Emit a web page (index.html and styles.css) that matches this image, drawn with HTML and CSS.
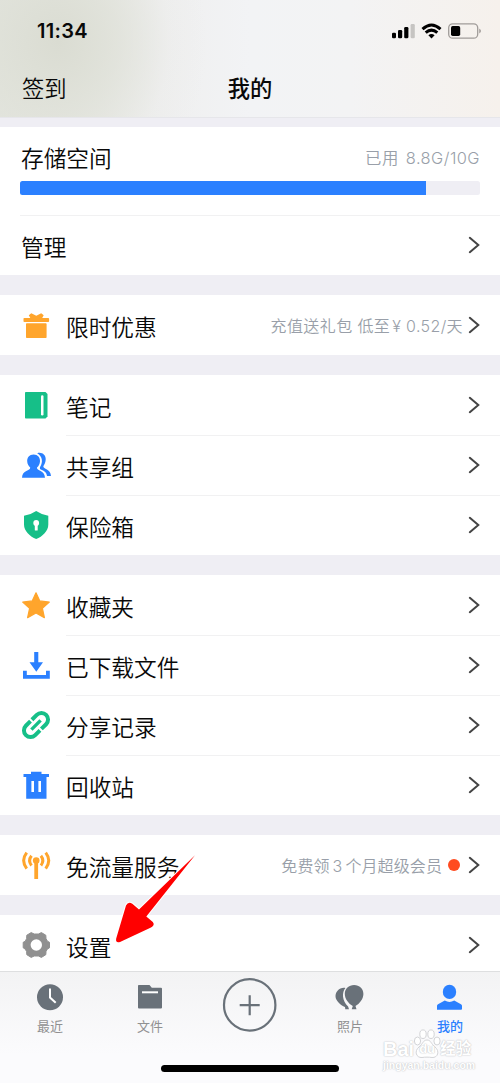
FILE: index.html
```html
<!DOCTYPE html>
<html lang="zh-CN">
<head>
<meta charset="utf-8">
<title>我的</title>
<link rel="stylesheet" href="styles.css">
</head>
<body>
<svg width="0" height="0" class="defs"><symbol id="chevron" viewBox="0 0 12 18"><path d="M1.8 1.8 10.3 9 1.8 16.2" fill="none" stroke="#444" stroke-width="2" stroke-linecap="round"/></symbol></svg>
<div class="phone">
  <header class="header">
    <div class="status">
      <span class="time">11:34</span>
      <svg class="status-icons" width="92" height="20" viewBox="0 0 92 20">
        <rect x="1" y="11.7" width="4" height="5.6" rx="1.3"/><rect x="7" y="9" width="4.2" height="8.3" rx="1.3"/><rect x="13.2" y="6" width="4.2" height="11.3" rx="1.3"/><rect x="19.6" y="3" width="4.2" height="14.3" rx="1.3" fill="#c6c4c2"/>
        <g fill="none" stroke="#000" stroke-width="3"><path d="M31.5 8.1Q40.5 0 49.5 8.1"/><path d="M34.7 11.7Q40.5 6.6 46.3 11.7"/></g>
        <path d="M37.4 14.2Q40.5 11.7 43.6 14.2L40.5 17.4Z"/>
        <rect x="57.7" y="2.8" width="29" height="14.4" rx="4" fill="none" stroke="#a09c99" stroke-width="1.3"/><rect x="60" y="5" width="9.2" height="10" rx="1.7"/><path d="M88.3 7.5Q91.5 10 88.3 12.5Z" fill="#98928f"/>
      </svg>
    </div>
    <div class="nav"><span class="checkin">签到</span><h1 class="title">我的</h1><span></span></div>
  </header>

  <main class="content">
    <section class="group storage">
      <div class="usage">
        <div class="usage-head"><span class="label">存储空间</span><span class="used">已用 8.8G/10G</span></div>
        <div class="meter"><div class="meter-fill" style="width:88.2%"></div></div>
      </div>
      <div class="row manage"><span class="label">管理</span><svg class="chevron"><use href="#chevron"/></svg></div>
    </section>

    <section class="group">
      <div class="row">
        <svg class="icon" viewBox="0 0 30 30" fill="#ffa52c"><rect x="5" y="13.2" width="20.6" height="14.8" rx=".8"/><rect x="2.5" y="8" width="25.6" height="4" rx=".8"/><path d="M9.3 8 7.8 5.3 10.3 3.2 15.3 5.8 20.2 3.2 22.7 5.3 21.2 8Z"/></svg>
        <span class="label">限时优惠</span><span class="note promo">充值送礼包 低至<span class="yen">¥</span> 0.52/天</span><svg class="chevron"><use href="#chevron"/></svg>
      </div>
    </section>

    <section class="group">
      <div class="row">
        <svg class="icon" viewBox="0 0 30 30"><path d="M4.8 2H24.5L26.5 4V26.5L24.5 28.5H4.8Q4 28.5 4 27.7V2.8Q4 2 4.8 2Z" fill="#16bf88"/><rect x="20" y="5.2" width="2.5" height="20.3" rx="1.2" fill="#fff"/></svg>
        <span class="label">笔记</span><svg class="chevron"><use href="#chevron"/></svg>
      </div>
      <div class="row">
        <svg class="icon people" viewBox="0 0 30 30" fill="#2b80ff"><path d="M16.2 3.3C20.5 1.6 25 4.8 24.7 9.5 24.6 12.2 23.5 14.6 22.3 16.2 22.2 19.5 29.5 18.5 30 26H26C25.6 21.7 22 20.3 19.3 19.2 18.7 18.9 18.8 17.3 19.2 16.8 22.2 12 21.4 6.2 16.2 3.3Z"/><path d="M12.6 4.4C16.9 4.4 19.2 7.5 19 11.2 18.9 13.8 17.5 16.3 16 17.5 15.5 21.4 23.7 19.6 24 27.8H1C1.2 19.6 9.6 21.3 9.2 17.5 7.5 16.1 6.3 13.8 6.2 11.2 6 7.5 8.3 4.4 12.6 4.4Z"/></svg>
        <span class="label">共享组</span><svg class="chevron"><use href="#chevron"/></svg>
      </div>
      <div class="row">
        <svg class="icon" viewBox="0 0 30 30"><path d="M15.2 1.1Q20.5 4.8 27.3 5.7V14.5C27.3 21 21.5 26.6 15.2 29.1 9 26.6 3 21 3 14.5V5.7Q10 4.8 15.2 1.1Z" fill="#16bf88"/><circle cx="15.2" cy="13" r="2.9" fill="#fff"/><rect x="13.8" y="14" width="2.9" height="6.5" rx=".5" fill="#fff"/></svg>
        <span class="label">保险箱</span><svg class="chevron"><use href="#chevron"/></svg>
      </div>
    </section>

    <section class="group">
      <div class="row">
        <svg class="icon" viewBox="0 0 30 30"><path d="M15 2.8 18.8 10.9 28.3 12.1 21.4 18.3 23.4 27.7 15 23 6.6 27.7 8.6 18.3 1.7 12.1 11.2 10.9Z" fill="#ffa52c" stroke="#ffa52c" stroke-width="1.2" stroke-linejoin="round"/></svg>
        <span class="label">收藏夹</span><svg class="chevron"><use href="#chevron"/></svg>
      </div>
      <div class="row">
        <svg class="icon" viewBox="0 0 30 30" fill="#2b80ff"><path d="M13.2 2H17.3V12.2H22L15.3 21.7 8.5 12.2H13.2Z"/><path d="M2 20.7H5.8V25H25V20.7H28.8V28.8H2Z"/></svg>
        <span class="label">已下载文件</span><svg class="chevron"><use href="#chevron"/></svg>
      </div>
      <div class="row">
        <svg class="icon" viewBox="0 0 30 30" fill="none" stroke="#16bf88" stroke-width="4"><g transform="rotate(-45 15 15)"><path d="M14 21.6H7.3A6.6 6.6 0 0 1 7.3 8.4H13.8"/><path d="M15.8 8.4H22.7A6.6 6.6 0 0 1 22.7 21.6H16"/><path d="M8.5 15H21.5" stroke-width="3.4"/></g></svg>
        <span class="label">分享记录</span><svg class="chevron"><use href="#chevron"/></svg>
      </div>
      <div class="row">
        <svg class="icon" viewBox="0 0 30 30" fill="#2b80ff"><path d="M10 1.8H20.5V4H28V7H25.5V28.8H5.2V7H2.5V4H10Z"/><path d="M10.4 11H13V22H10.4ZM17.4 11H20V22H17.4Z" fill="#fff"/></svg>
        <span class="label">回收站</span><svg class="chevron"><use href="#chevron"/></svg>
      </div>
    </section>

    <section class="group">
      <div class="row">
        <svg class="icon" viewBox="0 0 30 30" fill="none" stroke="#ffa52c" stroke-width="3"><circle cx="15.2" cy="10.5" r="3.3" fill="#ffa52c" stroke="none"/><path d="M15.2 11V29" stroke-width="3.8"/><path d="M10.5 5.7Q6.7 10.5 10.5 15.5M19.9 5.7Q23.7 10.5 19.9 15.5"/><path d="M5.7 2.6Q-.4 10.5 5.7 18.7M24.7 2.6Q30.8 10.5 24.7 18.7"/></svg>
        <span class="label">免流量服务</span><span class="note vip">免费领<span class="num">3</span>个月超级会员</span><span class="dot"></span><svg class="chevron"><use href="#chevron"/></svg>
      </div>
    </section>

    <section class="group">
      <div class="row">
        <svg class="icon" viewBox="0 0 30 30"><path d="M10.2 2.6 13.2 4H17.4L20.4 2.6 24.8 5.2 25 8.5 26.4 11.2 28.5 12.3V17.8L26.2 19.2 25 21.6 24.8 24.7 20.4 27.4 17.4 26H13.2L10.2 27.4 5.8 24.7 5.6 21.6 4.3 19.2 2.2 17.8V12.3L4.3 11.2 5.6 8.5 5.8 5.2Z" fill="#909090" stroke="#909090" stroke-width="1" stroke-linejoin="round"/><circle cx="15.3" cy="15" r="5.7" fill="#fff"/></svg>
        <span class="label">设置</span><svg class="chevron"><use href="#chevron"/></svg>
      </div>
    </section>
  </main>

  <footer class="footer">
    <nav class="tabs">
      <div class="tab"><svg class="tab-icon" viewBox="0 0 30 30"><circle cx="15" cy="15.3" r="13" fill="#697179"/><path d="M15 6.6V15.5L20.7 20.8" fill="none" stroke="#fff" stroke-width="2"/></svg><span>最近</span></div>
      <div class="tab"><svg class="tab-icon" viewBox="0 0 30 30"><path d="M3.8 3H14.5L16.8 5.8H26Q27 5.8 27 6.8V25.5Q27 26.5 26 26.5H4Q3 26.5 3 25.5V3.8Q3 3 3.8 3Z" fill="#697179"/><path d="M7 10.3H23" stroke="#fff" stroke-width="2"/></svg><span>文件</span></div>
      <div class="tab add"><svg class="add-icon" viewBox="0 0 56 56" fill="none" stroke="#697179" stroke-width="2.2"><circle cx="27.7" cy="27.9" r="25.7"/><path d="M17.7 28.2H37.7M27.7 18.2V38.2"/></svg></div>
      <div class="tab"><svg class="tab-icon" viewBox="0 0 30 30" fill="#697179"><path d="M10.4 5.9C4.5 5 .5 9.6 .5 14.3 .5 18.7 5.5 23.3 10 25L10.3 27.3H14L13.1 24.6C7 18.2 6.7 10.4 10.4 5.9Z"/><path d="M19.1 3C24.4 3 28.4 6.7 28.4 12 28.4 17 24.4 21.8 20.5 24L21.5 27.3H16.7L17.8 24C13.8 21.8 9.8 17 9.8 12 9.8 6.7 13.8 3 19.1 3Z"/></svg><span>照片</span></div>
      <div class="tab active"><svg class="tab-icon" viewBox="0 0 30 30" fill="#2b80ff"><ellipse cx="14.5" cy="9.9" rx="6.7" ry="7.2"/><path d="M2 27.8V23.8Q2 22.8 3 22.3L9.8 18.6Q14.5 21.5 19.2 18.6L26 22.3Q27 22.8 27 23.8V27Q27 27.8 26 27.8Z"/></svg><span>我的</span></div>
    </nav>
    <div class="home-bar"></div>
  </footer>

  <svg class="pointer" width="90" height="96" viewBox="110 852 90 96"><path d="M195 855.3 146.3 916.4 152.8 922Q155.3 925.3 151 927.5L120 942Q115.2 943.2 116.2 938.5L126 905.5Q128.2 901.2 132.3 903.7L139 909.5Z" fill="#f00" stroke="#fff" stroke-width="2.2" stroke-linejoin="round" paint-order="stroke"/></svg>

  <div class="watermark">
    <div class="mark-line"><span class="bai">Bai</span><span class="paw"><svg viewBox="0 0 28 30" width="28" height="30"><g fill="#fff" stroke="#d3d4d7" stroke-width="1"><ellipse cx="4.5" cy="12" rx="3.1" ry="4"/><ellipse cx="10" cy="5.2" rx="3.2" ry="4.3"/><ellipse cx="18" cy="5.2" rx="3.2" ry="4.3"/><ellipse cx="24" cy="12" rx="3.1" ry="4"/><path d="M14 11C18 11 18 15 22 18 27 22 25 29 19 28.5 16 28 12 28 9 28.5 3 29 1 22 6 18 10 15 10 11 14 11Z"/></g></svg><span class="du">du</span></span><span class="exp">经验</span></div>
    <div class="mark-url">jingyan.baidu.com</div>
  </div>
</div>
</body>
</html>
```

FILE: styles.css
```css
* { box-sizing: border-box; }
body { margin: 0; background: #efeef4; font-family: Inter, "Noto Sans CJK SC", sans-serif; color: #090909; }
.defs { display: block; position: absolute; }
.phone { position: relative; width: 500px; height: 1083px; overflow: hidden; display: flex; flex-direction: column; }

.header {
  height: 118px; flex: none; border-bottom: 1px solid #e6e6ea;
  background:
    radial-gradient(ellipse 150px 170px at 58px 42px, #dadcd2 0%, rgba(222,224,215,.7) 40%, rgba(232,233,229,.25) 75%, rgba(238,239,237,0) 100%),
    linear-gradient(90deg, #e2e4dd 0%, #e9eae6 20%, #efefef 32%, #f2f3f5 50%, #f3f3f4 70%, #f6f1ec 100%);
}
.status { height: 60px; display: flex; justify-content: space-between; align-items: center; padding: 2px 18px 0 37px; }
.time { font-size: 20px; font-weight: 600; line-height: 24px; letter-spacing: .3px; }
.status-icons { display: block; margin-right: -.5px; }
.nav { height: 54px; display: grid; grid-template-columns: 1fr auto 1fr; align-items: center; padding: 0 22px; font-size: 22.3px; font-weight: 350; }
.title { margin: 0; font-size: 22.3px; font-weight: 500; }

.content { height: 853px; flex: none; overflow: hidden; padding-top: 9px; display: flex; flex-direction: column; gap: 20px; }
.group { flex: none; background: #fff; }
.label { font-family: "Noto Sans CJK SC DemiLight", "Noto Sans CJK SC", sans-serif; font-size: 22.7px; font-weight: 350; line-height: 34px; white-space: nowrap; }
.row { height: 60px; display: flex; align-items: center; padding: 0 20px 0 21px; }
.row .label { margin-left: 15px; padding-top: 4px; }
.row.manage .label { margin-left: 0; }
.row + .row { background: linear-gradient(#f1f1f2, #f1f1f2) 66px 0 / 434px 1px no-repeat; }
.row.manage { background: linear-gradient(#f1f1f2, #f1f1f2) 20px 0 / 480px 1px no-repeat; }
.icon { width: 30px; height: 30px; flex: none; }
.icon.people { overflow: visible; }
.chevron { width: 12px; height: 18px; flex: none; margin-left: auto; }
.usage { height: 88px; padding: 14px 20px 0 21px; }
.usage-head { display: flex; justify-content: space-between; align-items: center; height: 34px; }
.used { color: #999fa9; font-size: 16.4px; font-weight: 350; letter-spacing: .45px; word-spacing: 2px; padding-bottom: 3px; }
.meter { height: 14px; margin: 6px 0 0 -1px; border-radius: 2.5px; background: #efeef4; overflow: hidden; }
.meter-fill { height: 14px; background: #2b80ff; }
.note { margin-left: auto; color: #999fa9; font-size: 16px; font-weight: 350; white-space: nowrap; padding-bottom: 1px; }
.promo { letter-spacing: .38px; }
.vip { letter-spacing: .1px; }
.note ~ .chevron { margin-left: 5px; }
.yen { padding-left: 2px; }
.num { padding: 0 3px; }
.dot { width: 12px; height: 12px; border-radius: 50%; background: #ff4b20; margin: 0 3px 0 6px; }

.footer { height: 112px; flex: none; border-top: 1px solid #dedfe0; background: linear-gradient(#f3f3f4, #fbfbfd 75%); }
.tabs { height: 93px; display: grid; grid-template-columns: repeat(5, 1fr); }
.tab { display: flex; flex-direction: column; align-items: center; padding-top: 10px; gap: 4px; font-size: 13px; line-height: 20px; color: #909091; }
.tab-icon { width: 30px; height: 30px; }
.tab.active { color: #2b80ff; }
.tab.active span { font-weight: 500; }
.tab.add { padding-top: 5px; }
.add-icon { width: 56px; height: 56px; }
.home-bar { width: 178px; height: 7px; border-radius: 4px; background: #000; margin: 0 auto; }

.pointer { position: absolute; left: 110px; top: 852px; }
.watermark { position: absolute; left: 383px; top: 1028px; width: 96px; color: #fff; text-shadow: 0 0 1px #c2c3c6, 0 0 2px #cccdd0; }
.mark-line { display: flex; height: 34px; align-items: center; }
.bai { font: 700 20px/22px "Liberation Sans", sans-serif; padding-top: 8px; }
.paw { position: relative; width: 28px; height: 30px; margin: 0 -1px; top: -1px; }
.du { position: absolute; left: 5px; top: 13px; width: 18px; text-align: center; font: 700 13px/14px "Liberation Sans", sans-serif; }
.exp { font-size: 15.5px; font-weight: 700; line-height: 20px; padding-top: 8px; }
.mark-url { font: 700 10.5px/12px "Liberation Sans", sans-serif; margin-top: -3px; white-space: nowrap; }
```
